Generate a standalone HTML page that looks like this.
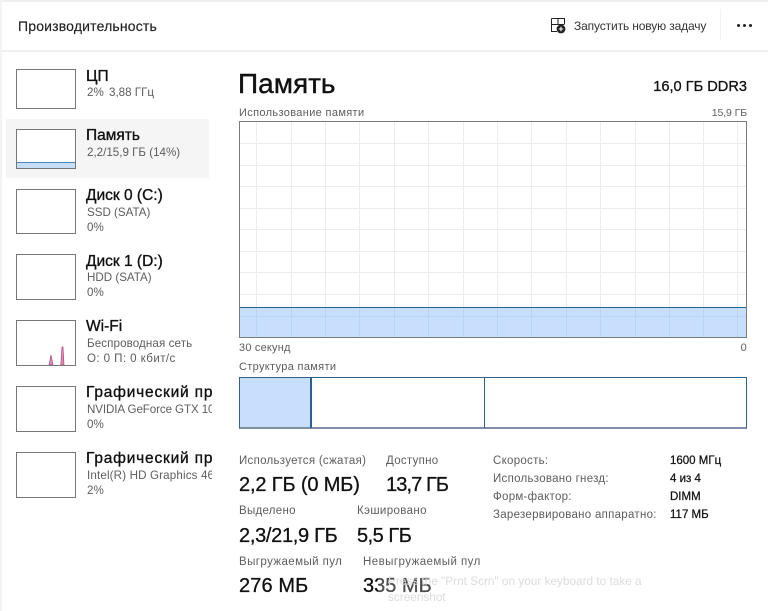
<!DOCTYPE html>
<html lang="ru"><head><meta charset="utf-8"><title>Производительность</title>
<style>
html,body{margin:0;padding:0;background:#fff}
#p{position:relative;width:768px;height:611px;overflow:hidden;background:#fff;font-family:"Liberation Sans",sans-serif;color:#1a1a1a}
.t{position:absolute;white-space:nowrap;line-height:1}
.g{color:#5d5d5d;font-size:11.6px}
.h{color:#111;font-size:15.5px;-webkit-text-stroke:.35px #111}
.v{color:#111;font-size:20px;-webkit-text-stroke:.3px #111}
.l{color:#5d5d5d;font-size:11.5px;letter-spacing:.28px}
.b{position:absolute;box-sizing:border-box;left:16px;width:60px;border:1px solid #777;background:#fff}
.d{color:#111;font-size:11.5px;left:670px;-webkit-text-stroke:.25px #111}
</style></head><body><div id="p">
<div style="position:absolute;left:0;top:0;width:768px;height:2px;background:#efefef"></div>
<div style="position:absolute;left:0;top:0;width:2px;height:611px;background:#f3f3f3"></div>
<div style="position:absolute;left:0;top:50px;width:768px;height:2px;background:#efefef"></div>
<div class="t" style="left:18px;top:19px;font-size:14px;color:#222;letter-spacing:.17px;-webkit-text-stroke:.15px #222">Производительность</div>

<svg style="position:absolute;left:549px;top:16px" width="20" height="20" viewBox="0 0 20 20" fill="none" stroke="#222" stroke-width="1"><path d="M2.5 2.5H15.5V8M2.5 2.5V15.5H8M2.5 8.5H15.5M9 2.5V8.5"/><circle cx="12" cy="13" r="4.4" fill="#222" stroke="none"/><path d="M12 10.8V15.2M9.8 13H14.2" stroke="#fff" stroke-width="1.1"/></svg>
<div class="t" style="left:574px;top:20px;font-size:12px;color:#333;letter-spacing:-.13px">Запустить новую задачу</div>
<div style="position:absolute;left:720px;top:9px;width:1px;height:31px;background:#f2f2f2"></div>
<div style="position:absolute;left:737px;top:24px;width:3px;height:3px;border-radius:50%;background:#222;box-shadow:6px 0 #222,12px 0 #222"></div>

<div style="position:absolute;left:6px;top:119px;width:203px;height:59px;background:#f5f5f5"></div>

<div class="b" style="top:69px;height:40px"></div>
<div class="t h" style="left:86px;top:69px">ЦП</div>
<div class="t g" style="left:87px;top:87px">2%</div>
<div class="t g" style="left:109px;top:87px">3,88 ГГц</div>

<div class="b" style="top:129px;height:40px"></div>
<div style="position:absolute;left:17px;top:162px;width:58px;height:5px;background:#c7defa;border-top:1px solid #4a86b8"></div>
<div class="t h" style="left:86px;top:128px">Память</div>
<div class="t g" style="left:87px;top:147px">2,2/15,9 ГБ (14%)</div>

<div class="b" style="top:189px;height:45px"></div>
<div class="t h" style="left:86px;top:188px">Диск 0 (C:)</div>
<div class="t g" style="left:87px;top:207px">SSD (SATA)</div>
<div class="t g" style="left:87px;top:222px">0%</div>

<div class="b" style="top:254px;height:46px"></div>
<div class="t h" style="left:86px;top:254px">Диск 1 (D:)</div>
<div class="t g" style="left:87px;top:272px">HDD (SATA)</div>
<div class="t g" style="left:87px;top:287px">0%</div>

<div class="b" style="top:320px;height:46px"></div>
<svg style="position:absolute;left:17px;top:321px" width="58" height="44" viewBox="0 0 58 44"><path d="M32 44L34 34L36 44ZM43.8 44L45 26L46 26L47 44Z" fill="#d98fb0" stroke="#b8447c" stroke-width=".7"/></svg>
<div class="t h" style="left:86px;top:319px">Wi-Fi</div>
<div class="t g" style="left:87px;top:338px;letter-spacing:.1px">Беспроводная сеть</div>
<div class="t g" style="left:87px;top:353px;letter-spacing:.4px">О: 0 П: 0 кбит/с</div>

<div class="b" style="top:386px;height:46px"></div>
<div class="t h" style="left:86px;top:385px;width:126px;height:18px;overflow:hidden;letter-spacing:.8px">Графический процессор</div>
<div class="t g" style="left:87px;top:404px;width:125px;height:14px;overflow:hidden;letter-spacing:-.1px">NVIDIA GeForce GTX 1050</div>
<div class="t g" style="left:87px;top:419px">0%</div>

<div class="b" style="top:452px;height:46px"></div>
<div class="t h" style="left:86px;top:451px;width:126px;height:18px;overflow:hidden;letter-spacing:.8px">Графический процессор</div>
<div class="t g" style="left:87px;top:470px;width:125px;height:14px;overflow:hidden;letter-spacing:.15px">Intel(R) HD Graphics 4600</div>
<div class="t g" style="left:87px;top:485px">2%</div>

<div class="t" style="left:238px;top:70px;font-size:28px;color:#111;-webkit-text-stroke:.4px #111">Память</div>
<div class="t" style="right:21px;top:80px;font-size:14.6px;color:#111;-webkit-text-stroke:.3px #111">16,0 ГБ DDR3</div>
<div class="t l" style="left:239px;top:108px;font-size:11px;letter-spacing:.35px">Использование памяти</div>
<div class="t l" style="right:21px;top:108px;font-size:10.5px;letter-spacing:-.1px">15,9 ГБ</div>

<svg style="position:absolute;left:239px;top:121px" width="508" height="217" viewBox="0 0 508 217" shape-rendering="crispEdges">
<rect x="0" y="186" width="508" height="30" fill="#c7dffc"/>
<g stroke="#ececec" stroke-width="1">
<path d="M0 22.5H508M0 44.5H508M0 65.5H508M0 87.5H508M0 108.5H508M0 130.5H508M0 151.5H508M0 173.5H508"/>
<path d="M17.5 0V186M52.5 0V186M86.5 0V186M120.5 0V186M155.5 0V186M189.5 0V186M224.5 0V186M258.5 0V186M292.5 0V186M327.5 0V186M361.5 0V186M396.5 0V186M430.5 0V186M464.5 0V186M498.5 0V186"/>
</g>
<g stroke="#b9d3f1" stroke-width="1">
<path d="M0 195.5H508"/>
<path d="M17.5 186V216M52.5 186V216M86.5 186V216M120.5 186V216M155.5 186V216M189.5 186V216M224.5 186V216M258.5 186V216M292.5 186V216M327.5 186V216M361.5 186V216M396.5 186V216M430.5 186V216M464.5 186V216M498.5 186V216"/>
</g>
<path d="M0 186.5H508" stroke="#25618f"/>
<rect x=".5" y=".5" width="507" height="216" fill="none" stroke="#7b7b7b"/>
</svg>

<div class="t l" style="left:239px;top:343px;font-size:11px;letter-spacing:.2px">30 секунд</div>
<div class="t l" style="right:21px;top:343px;font-size:11px">0</div>
<div class="t l" style="left:239px;top:362px;font-size:11px;letter-spacing:.33px">Структура памяти</div>

<div style="position:absolute;box-sizing:border-box;left:239px;top:377px;width:508px;height:52px;border:1px solid #35608c;border-bottom:2px solid #7f8fa6;background:#fff"></div>
<div style="position:absolute;left:240px;top:378px;width:70px;height:49px;background:#c7dffc"></div>
<div style="position:absolute;left:310px;top:378px;width:2px;height:50px;background:#2c5f93"></div>
<div style="position:absolute;left:484px;top:378px;width:1px;height:50px;background:#35608c"></div>

<div class="t l" style="left:239px;top:456px">Используется (сжатая)</div>
<div class="t v" style="left:239px;top:475px;letter-spacing:-.15px">2,2 ГБ (0 МБ)</div>
<div class="t l" style="left:386px;top:456px">Доступно</div>
<div class="t v" style="left:386px;top:475px;letter-spacing:-.9px">13,7 ГБ</div>
<div class="t l" style="left:239px;top:506px">Выделено</div>
<div class="t v" style="left:239px;top:526px;letter-spacing:-.3px">2,3/21,9 ГБ</div>
<div class="t l" style="left:357px;top:506px;letter-spacing:.38px">Кэшировано</div>
<div class="t v" style="left:357px;top:526px;letter-spacing:-.5px">5,5 ГБ</div>
<div class="t l" style="left:239px;top:557px;letter-spacing:.42px">Выгружаемый пул</div>
<div class="t v" style="left:239px;top:576px;letter-spacing:.1px">276 МБ</div>
<div class="t l" style="left:363px;top:557px;letter-spacing:.45px">Невыгружаемый пул</div>
<div class="t v" style="left:363px;top:576px">335 МБ</div>

<div style="position:absolute;left:378px;top:566px;width:270px;height:45px;background:rgba(255,255,255,.25)"></div>
<div class="t" style="left:388px;top:576px;font-size:11.8px;color:#dcdcdc">Press the "Prnt Scrn" on your keyboard to take a</div>
<div class="t" style="left:388px;top:592px;font-size:11.8px;color:#dcdcdc">screenshot</div>

<div class="t l" style="left:493px;top:456px">Скорость:</div>
<div class="t l" style="left:493px;top:474px">Использовано гнезд:</div>
<div class="t l" style="left:493px;top:492px">Форм-фактор:</div>
<div class="t l" style="left:493px;top:510px">Зарезервировано аппаратно:</div>
<div class="t d" style="top:456px">1600 МГц</div>
<div class="t d" style="top:474px">4 из 4</div>
<div class="t d" style="top:492px">DIMM</div>
<div class="t d" style="top:510px">117 МБ</div>
</div></body></html>
